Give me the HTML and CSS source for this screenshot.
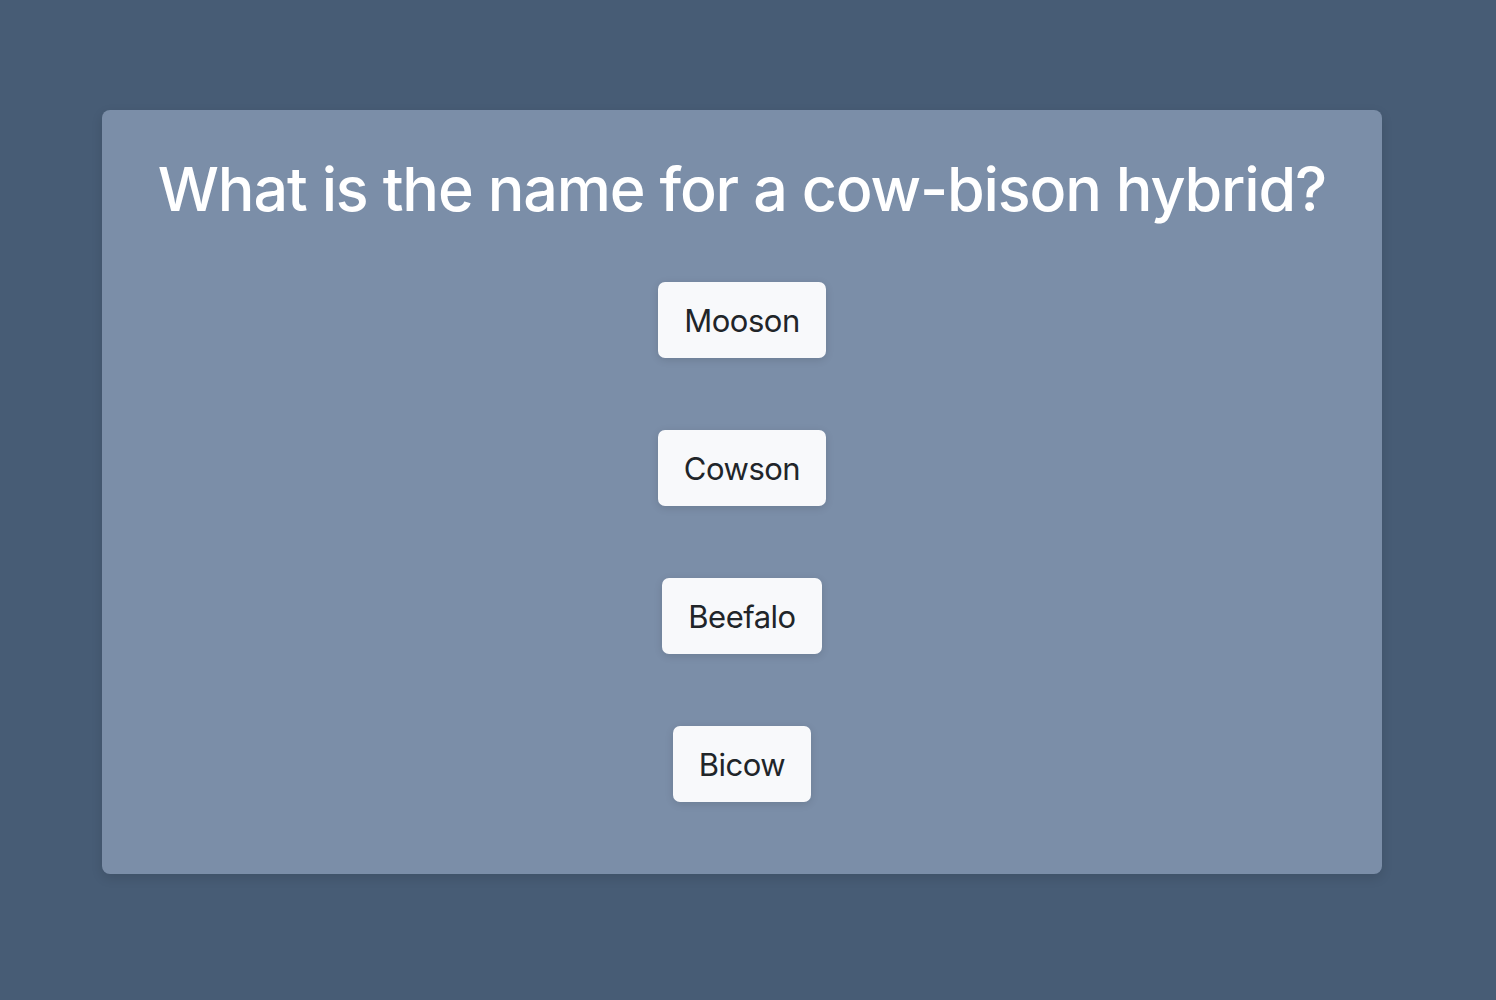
FILE: index.html
```html
<!DOCTYPE html>
<html lang="en">
<head>
<meta charset="utf-8">
<title>Quiz</title>
<link rel="stylesheet" href="styles.css">
</head>
<body>
<main class="page">
  <section class="card">
    <h1 class="question">What is the name for a cow-bison hybrid?</h1>
    <div class="answers">
      <button class="answer">Mooson</button>
      <button class="answer">Cowson</button>
      <button class="answer">Beefalo</button>
      <button class="answer">Bicow</button>
    </div>
  </section>
</main>
</body>
</html>
```

FILE: styles.css
```css
* { box-sizing: border-box; }
html, body {
  margin: 0;
  padding: 0;
  height: 100%;
}
body {
  background: #475c75;
  font-family: Inter, "Noto Sans", "Liberation Sans", sans-serif;
}
.page {
  padding: 110px 0 0 102px;
}
.card {
  width: 1280px;
  height: 764px;
  background: #7b8ea8;
  border-radius: 8px;
  box-shadow: 0 4px 12px rgba(0, 0, 0, 0.12);
  padding: 43px 0 0;
  display: flex;
  flex-direction: column;
  align-items: center;
}
.question {
  margin: 0;
  color: #ffffff;
  font-size: 61px;
  font-weight: 500;
  letter-spacing: -1.15px;
  line-height: 72px;
  text-align: center;
}
.answers {
  margin-top: 57px;
  display: flex;
  flex-direction: column;
  align-items: center;
  gap: 72px;
}
.answer {
  height: 76px;
  padding: 1px 26px 0;
  border: none;
  border-radius: 7px;
  background: #f8f9fb;
  color: #212529;
  font-family: Inter, "Noto Sans", "Liberation Sans", sans-serif;
  font-size: 31px;
  font-weight: 400;
  letter-spacing: -0.5px;
  line-height: 36px;
  box-shadow: 0 2px 8px rgba(0, 0, 0, 0.12);
  cursor: pointer;
}
```
